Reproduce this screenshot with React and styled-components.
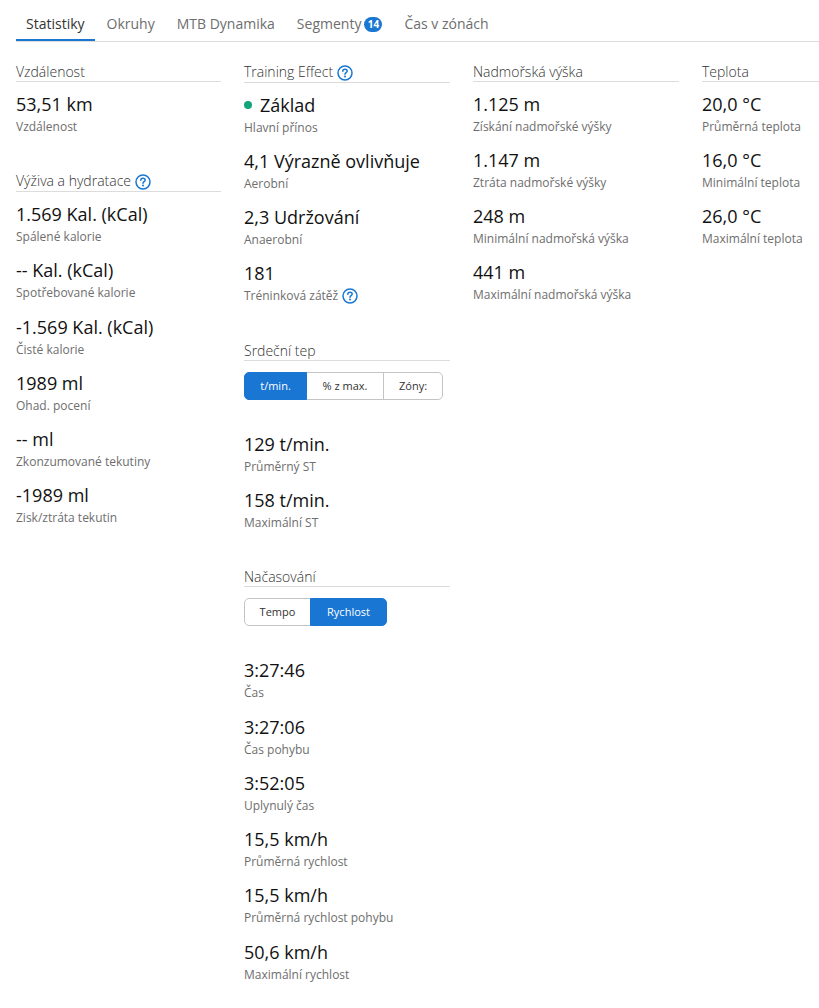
import styled, { createGlobalStyle } from 'styled-components';

const GlobalStyle = createGlobalStyle`
  html, body {
    margin: 0;
    padding: 0;
    background: #fff;
    font-family: 'Open Sans', sans-serif;
    color: #111;
    overflow: hidden;
  }
`;

const Page = styled.div`
  width: 819px;
  height: 1008px;
  padding: 0 0 0 16px;
  box-sizing: border-box;
  overflow: hidden;
`;

const TabBar = styled.div`
  display: flex;
  height: 42px;
  box-sizing: border-box;
  border-bottom: 1px solid #dcdcdc;
  gap: 2px;
  padding-top: 13px;
`;

const Tab = styled.div`
  height: 28px;
  box-sizing: border-box;
  padding: 0 10px;
  font-size: 14px;
  line-height: 22px;
  color: ${p => (p.$active ? '#333' : '#6e6e6e')};
  border-bottom: 2px solid ${p => (p.$active ? '#1976d2' : 'transparent')};
  display: flex;
  align-items: flex-start;
  gap: 3px;
`;

const Badge = styled.span`
  display: inline-block;
  width: 18px;
  height: 15px;
  margin-top: 4px;
  border-radius: 8px;
  background: #1976d2;
  color: #fff;
  font-size: 10px;
  font-weight: 700;
  line-height: 15px;
  text-align: center;
`;

const Columns = styled.div`
  display: grid;
  grid-template-columns: 205px 206px 206px 206px;
  column-gap: 23px;
  padding-top: 20px;
`;

const Column = styled.div`
  display: flex;
  flex-direction: column;
  gap: 24.55px;
`;

const Section = styled.section`
  display: block;
  margin-top: ${p => p.$nudge || 0}px;
`;

const Heading = styled.h3`
  margin: 0 0 8.55px;
  height: ${p => (p.$withHelp ? 21 : 20)}px;
  box-sizing: border-box;
  border-bottom: 1px solid #dcdcdc;
  font-size: 14px;
  font-weight: 300;
  line-height: 19px;
  color: #333;
  display: flex;
  align-items: flex-start;
  gap: 4px;

  svg {
    margin-top: 3px;
  }
`;

const Stat = styled.div`
  height: 56.3px;
`;

const Value = styled.div`
  font-size: 18px;
  line-height: 26px;
  margin-bottom: 2px;
  color: #111;
  display: flex;
  align-items: center;
  white-space: nowrap;
`;

const Label = styled.div`
  font-size: 12px;
  line-height: 16px;
  margin-top: ${p => (p.$withHelp ? 1 : 0)}px;
  color: #6e6e6e;
  display: flex;
  align-items: center;
  gap: 4px;
  white-space: nowrap;
`;

const Dot = styled.span`
  width: 8px;
  height: 8px;
  border-radius: 50%;
  background: #11a579;
  margin-right: 8px;
`;

const Toggle = styled.div`
  display: flex;
  height: 28px;
  margin: 11px 0 ${p => p.$after}px;
`;

const ToggleButton = styled.div`
  position: relative;
  z-index: ${p => (p.$active ? 1 : 0)};
  width: ${p => p.$w}px;
  box-sizing: border-box;
  border: 1px solid ${p => (p.$active ? '#1976d2' : '#c4c4c4')};
  background: ${p => (p.$active ? '#1976d2' : '#fff')};
  color: ${p => (p.$active ? '#fff' : '#333')};
  font-size: 11px;
  font-weight: 500;
  line-height: 26px;
  text-align: center;

  & + & {
    margin-left: -1px;
  }

  &:first-child {
    border-radius: 5px 0 0 5px;
  }

  &:last-child {
    border-radius: 0 5px 5px 0;
  }
`;

const Help = () => (
  <svg width="16" height="16" viewBox="0 0 16 16" fill="none" style={{ flex: 'none' }}>
    <circle cx="8" cy="8" r="7" stroke="#1976d2" strokeWidth="1.5" />
    <path d="M5.8 6.2c0-1.2 1-2 2.2-2s2.2.8 2.2 1.9c0 1.5-2.2 1.6-2.2 3.2" stroke="#1976d2" strokeWidth="1.5" strokeLinecap="round" />
    <circle cx="8" cy="11.6" r="1" fill="#1976d2" />
  </svg>
);

const StatRow = ({ value, label, dot, help }) => (
  <Stat>
    <Value>{dot && <Dot />}{value}</Value>
    <Label $withHelp={help}>{label}{help && <Help />}</Label>
  </Stat>
);

const App = () => (
  <Page>
    <GlobalStyle />
    <TabBar>
      <Tab $active>Statistiky</Tab>
      <Tab>Okruhy</Tab>
      <Tab>MTB Dynamika</Tab>
      <Tab>Segmenty<Badge>14</Badge></Tab>
      <Tab>Čas v zónách</Tab>
    </TabBar>
    <Columns>
      <Column>
        <Section>
          <Heading>Vzdálenost</Heading>
          <StatRow value="53,51 km" label="Vzdálenost" />
        </Section>
        <Section>
          <Heading $withHelp>Výživa a hydratace <Help /></Heading>
          <StatRow value="1.569 Kal. (kCal)" label="Spálené kalorie" />
          <StatRow value="-- Kal. (kCal)" label="Spotřebované kalorie" />
          <StatRow value="-1.569 Kal. (kCal)" label="Čisté kalorie" />
          <StatRow value="1989 ml" label="Ohad. pocení" />
          <StatRow value="-- ml" label="Zkonzumované tekutiny" />
          <StatRow value="-1989 ml" label="Zisk/ztráta tekutin" />
        </Section>
      </Column>
      <Column>
        <Section>
          <Heading $withHelp>Training Effect <Help /></Heading>
          <StatRow dot value="Základ" label="Hlavní přínos" />
          <StatRow value="4,1 Výrazně ovlivňuje" label="Aerobní" />
          <StatRow value="2,3 Udržování" label="Anaerobní" />
          <StatRow value="181" label="Tréninková zátěž" help />
        </Section>
        <Section>
          <Heading>Srdeční tep</Heading>
          <Toggle $after={30.3}>
            <ToggleButton $active $w={63}>t/min.</ToggleButton>
            <ToggleButton $w={78}>% z max.</ToggleButton>
            <ToggleButton $w={60}>Zóny:</ToggleButton>
          </Toggle>
          <StatRow value="129 t/min." label="Průměrný ST" />
          <StatRow value="158 t/min." label="Maximální ST" />
        </Section>
        <Section $nudge={-0.4}>
          <Heading>Načasování</Heading>
          <Toggle $after={30.9}>
            <ToggleButton $w={67}>Tempo</ToggleButton>
            <ToggleButton $active $w={77}>Rychlost</ToggleButton>
          </Toggle>
          <StatRow value="3:27:46" label="Čas" />
          <StatRow value="3:27:06" label="Čas pohybu" />
          <StatRow value="3:52:05" label="Uplynulý čas" />
          <StatRow value="15,5 km/h" label="Průměrná rychlost" />
          <StatRow value="15,5 km/h" label="Průměrná rychlost pohybu" />
          <StatRow value="50,6 km/h" label="Maximální rychlost" />
        </Section>
      </Column>
      <Column>
        <Section>
          <Heading>Nadmořská výška</Heading>
          <StatRow value="1.125 m" label="Získání nadmořské výšky" />
          <StatRow value="1.147 m" label="Ztráta nadmořské výšky" />
          <StatRow value="248 m" label="Minimální nadmořská výška" />
          <StatRow value="441 m" label="Maximální nadmořská výška" />
        </Section>
      </Column>
      <Column>
        <Section>
          <Heading>Teplota</Heading>
          <StatRow value="20,0 °C" label="Průměrná teplota" />
          <StatRow value="16,0 °C" label="Minimální teplota" />
          <StatRow value="26,0 °C" label="Maximální teplota" />
        </Section>
      </Column>
    </Columns>
  </Page>
);

export default App;
